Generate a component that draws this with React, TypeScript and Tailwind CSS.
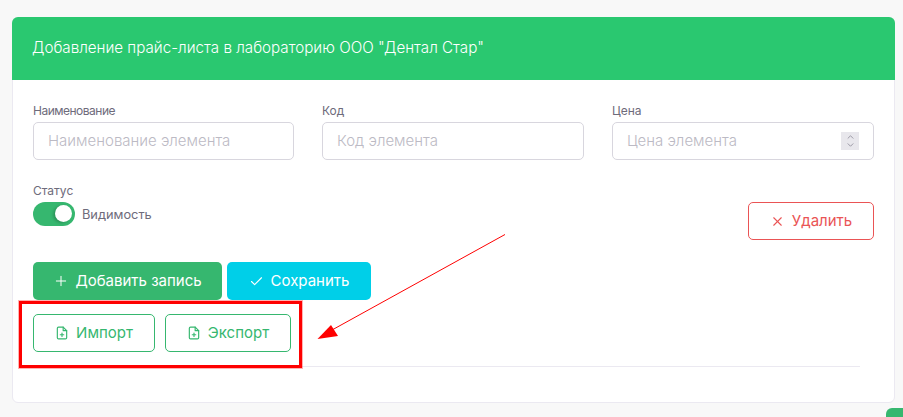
import React from "react";
import { Plus, Check, X, ChevronUp, ChevronDown } from "lucide-react";

const font = "font-['Inter','Noto_Sans',sans-serif]";

function FileIcon({ className }: { className?: string }) {
  return (
    <svg viewBox="0 0 24 24" fill="none" stroke="currentColor" strokeWidth="2" strokeLinecap="round" strokeLinejoin="round" className={className}>
      <path d="M14 2H6a2 2 0 0 0-2 2v16a2 2 0 0 0 2 2h12a2 2 0 0 0 2-2V8z" />
      <path d="M14 2v6h6" />
      <path d="M12 18v-6" />
      <path d="M9 15h6" />
    </svg>
  );
}

function Field({ label, placeholder, spin, labelClass }: { label: string; placeholder: string; spin?: boolean; labelClass?: string }) {
  return (
    <div className="flex flex-col">
      <label className={`text-[12px] leading-[16px] h-[16px] text-[#6e6b7b] mb-[3px] ${labelClass ?? ""}`}>{label}</label>
      <div className="h-[38px] rounded-[5px] border border-[#d8d6de] bg-white flex items-center pl-[14px] pr-[14px]">
        <span className="flex-1 text-[15px] text-[#bcbac4] font-light">{placeholder}</span>
        {spin && (
          <span className="w-[18px] h-[18px] bg-[#e8e7ec] flex flex-col items-center justify-center text-[#6e6b7b]">
            <ChevronUp size={11} strokeWidth={1.5} className="-mb-[1px]" />
            <ChevronDown size={11} strokeWidth={1.5} className="-mt-[1px]" />
          </span>
        )}
      </div>
    </div>
  );
}

export default function App() {
  return (
    <div className={`relative w-[903px] h-[417px] overflow-hidden bg-[#f8f8f8] pt-[17px] pl-[12px] ${font}`}>
      <div className="w-[883px] h-[386px] bg-white rounded-[6px] border border-[#ebe9f1] flex flex-col">
        <div className="h-[63px] -mx-px -mt-px shrink-0 rounded-t-[6px] bg-[#2ac870] flex items-center pl-[20px] text-[15.2px] text-white font-light">
          Добавление прайс-листа в лабораторию ООО "Дентал Стар"
        </div>
        <div className="pl-[20px] pr-[20px] pt-[23px] flex flex-col">
          <div className="grid grid-cols-[261px_262px_262px] gap-x-[28px] w-[841px]">
            <Field label="Наименование" placeholder="Наименование элемента" labelClass="tracking-[-0.5px]" />
            <Field label="Код" placeholder="Код элемента" />
            <Field label="Цена" placeholder="Цена элемента" spin />
          </div>
          <div className="flex justify-between w-[841px] mt-[23px]">
            <div className="flex flex-col">
              <span className="text-[12px] leading-[16px] text-[#6e6b7b]">Статус</span>
              <div className="flex items-center gap-[7px] mt-[3px]">
                <span className="relative w-[42px] h-[24px] rounded-full bg-[#36b76f] block">
                  <span className="absolute right-[3px] top-[3px] w-[17px] h-[17px] rounded-full bg-white shadow-[-2px_1px_3px_rgba(0,0,0,0.2)]" />
                </span>
                <span className="text-[12.8px] mt-[2px] text-[#6e6b7b]">Видимость</span>
              </div>
            </div>
            <button className="w-[126px] h-[38px] mt-[19px] rounded-[5px] border border-[#ea5455] text-[#ea5455] flex items-center justify-center gap-[7px] text-[15px]">
              <X size={15} strokeWidth={1.75} />
              Удалить
            </button>
          </div>
          <div className="flex gap-[5px] mt-[22px]">
            <button className="w-[189px] h-[38px] rounded-[5px] bg-[#36b76f] text-white flex items-center justify-center gap-[6px] text-[15px]">
              <Plus size={16} strokeWidth={1.5} />
              Добавить запись
            </button>
            <button className="w-[144px] h-[38px] rounded-[5px] bg-[#00cfe8] text-white flex items-center justify-center gap-[7px] text-[15px]">
              <Check size={15} strokeWidth={1.75} />
              Сохранить
            </button>
          </div>
          <div className="flex gap-[10px] mt-[14px]">
            <button className="w-[122px] h-[38px] rounded-[5px] border border-[#36b76f] text-[#36b76f] flex items-center justify-center gap-[7px] text-[15px]">
              <FileIcon className="w-[14px] h-[14px]" />
              Импорт
            </button>
            <button className="w-[126px] h-[38px] rounded-[5px] border border-[#36b76f] text-[#36b76f] flex items-center justify-center gap-[7px] text-[15px]">
              <FileIcon className="w-[14px] h-[14px]" />
              Экспорт
            </button>
          </div>
          <div className="h-px w-[827px] bg-[#ebe9f1] mt-[14px]" />
        </div>
      </div>

      <div className="absolute left-[19px] top-[301px] w-[283px] h-[67px] border-[3px] border-[#fe0000] shadow-[0_0_0_1px_rgba(254,0,0,0.3)]" />
      <svg className="absolute left-0 top-0 pointer-events-none" width="903" height="417" fill="none">
        <line x1="505" y1="234.5" x2="332" y2="330" stroke="#fe0000" strokeWidth="1" />
        <polygon points="317.5,339 331,325 338,336" fill="#fe0000" />
      </svg>
      <div className="absolute left-[886px] top-[408px] w-[30px] h-[30px] rounded-[6px] bg-[#36b76f]" />
    </div>
  );
}
